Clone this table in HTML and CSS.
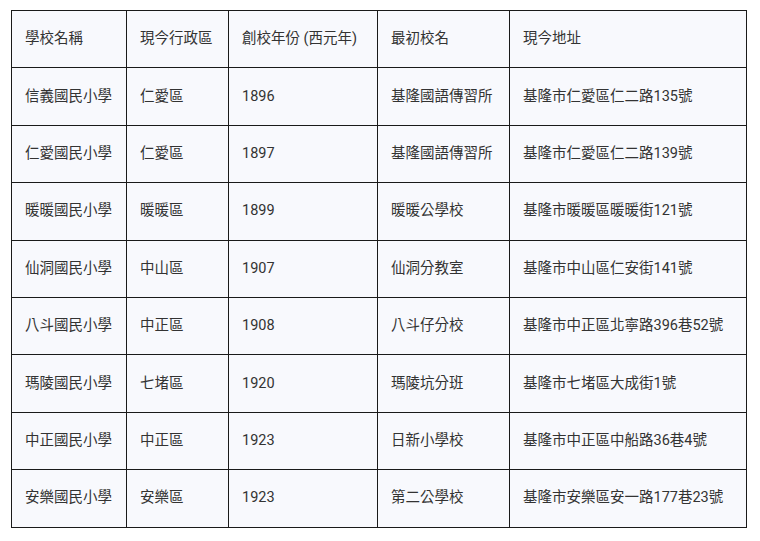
FILE: index.html
```html
<!DOCTYPE html>
<html lang="zh-Hant">
<head>
<meta charset="utf-8">
<link rel="stylesheet" href="styles.css">
</head>
<body>
<table class="schools">
  <colgroup>
    <col class="c1"><col class="c2"><col class="c3"><col class="c4"><col class="c5">
  </colgroup>
  <thead>
    <tr><th>學校名稱</th><th>現今行政區</th><th>創校年份 (西元年)</th><th>最初校名</th><th>現今地址</th></tr>
  </thead>
  <tbody>
    <tr><td>信義國民小學</td><td>仁愛區</td><td>1896</td><td>基隆國語傳習所</td><td>基隆市仁愛區仁二路135號</td></tr>
    <tr><td>仁愛國民小學</td><td>仁愛區</td><td>1897</td><td>基隆國語傳習所</td><td>基隆市仁愛區仁二路139號</td></tr>
    <tr><td>暖暖國民小學</td><td>暖暖區</td><td>1899</td><td>暖暖公學校</td><td>基隆市暖暖區暖暖街121號</td></tr>
    <tr><td>仙洞國民小學</td><td>中山區</td><td>1907</td><td>仙洞分教室</td><td>基隆市中山區仁安街141號</td></tr>
    <tr><td>八斗國民小學</td><td>中正區</td><td>1908</td><td>八斗仔分校</td><td>基隆市中正區北寧路396巷52號</td></tr>
    <tr><td>瑪陵國民小學</td><td>七堵區</td><td>1920</td><td>瑪陵坑分班</td><td>基隆市七堵區大成街1號</td></tr>
    <tr><td>中正國民小學</td><td>中正區</td><td>1923</td><td>日新小學校</td><td>基隆市中正區中船路36巷4號</td></tr>
    <tr><td>安樂國民小學</td><td>安樂區</td><td>1923</td><td>第二公學校</td><td>基隆市安樂區安一路177巷23號</td></tr>
  </tbody>
</table>
</body>
</html>
```
FILE: styles.css
```css
html, body {
  margin: 0;
  padding: 0;
  background: #ffffff;
}
body {
  padding: 10px 11px;
  font-family: Roboto, "Noto Sans CJK TC", "Noto Sans", sans-serif;
  font-size: 14.5px;
  color: #333333;
}
.schools {
  border-collapse: collapse;
  width: 735px;
  table-layout: fixed;
  background: #f8f9fd;
}
.c1 { width: 115px; }
.c2 { width: 102px; }
.c3 { width: 149px; }
.c4 { width: 132px; }
.c5 { width: 237px; }
.schools th,
.schools td {
  border: 1px solid #1a1a1a;
  padding: 0 13px;
  height: 56.4px;
  text-align: left;
  vertical-align: middle;
  font-weight: 400;
  line-height: 20px;
  white-space: nowrap;
}
```
